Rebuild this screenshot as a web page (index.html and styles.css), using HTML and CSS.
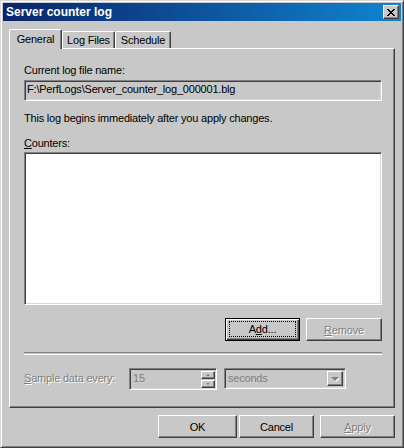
FILE: index.html
```html
<!DOCTYPE html>
<html lang="en">
<head>
    <meta charset="UTF-8">
    <title>Server counter log</title>
    <link rel="stylesheet" href="styles.css">
</head>
<body>
    <div class="window">
        <!-- Title Bar -->
        <div class="titlebar">
            <span class="title">Server counter log</span>
            <span class="close-btn">
                <svg width="8" height="7" viewBox="0 0 8 7" shape-rendering="crispEdges">
                    <path d="M0 0h2v1h-2z M6 0h2v1h-2z M1 1h2v1h-2z M5 1h2v1h-2z M2 2h4v1h-4z M3 3h2v1h-2z M2 4h4v1h-4z M1 5h2v1h-2z M5 5h2v1h-2z M0 6h2v1h-2z M6 6h2v1h-2z" fill="#000"/>
                </svg>
            </span>
        </div>

        <!-- Tabs -->
        <div class="tabs">
            <div class="tab active">General</div>
            <div class="tab">Log Files</div>
            <div class="tab">Schedule</div>
        </div>

        <!-- General Page -->
        <div class="panel">
            <div class="label">Current log file name:</div>
            <div class="field">F:\PerfLogs\Server_counter_log_000001.blg</div>
            <div class="note">This log begins immediately after you apply changes.</div>
            <div class="label counters-label"><u>C</u>ounters:</div>
            <div class="listbox"></div>

            <div class="list-actions">
                <div class="btn default"><span class="focus">A<u>d</u>d...</span></div>
                <div class="btn disabled"><u>R</u>emove</div>
            </div>

            <div class="separator"></div>

            <div class="sample-row">
                <span class="sample-label disabled"><u>S</u>ample data every:</span>
                <div class="spin">
                    <span class="spin-value">15</span>
                    <div class="updown">
                        <span class="ud"><i class="arrow up"></i></span>
                        <span class="ud"><i class="arrow down"></i></span>
                    </div>
                </div>
                <div class="combo">
                    <span class="combo-value">seconds</span>
                    <span class="drop"><i class="arrow down big"></i></span>
                </div>
            </div>
        </div>

        <!-- Dialog Buttons -->
        <div class="dialog-buttons">
            <div class="btn ok">OK</div>
            <div class="btn">Cancel</div>
            <div class="btn disabled"><u>A</u>pply</div>
        </div>
    </div>
</body>
</html>
```

FILE: styles.css
```css
/* General Styles */
body {
    margin: 0;
    font-family: 'Liberation Sans', Arial, sans-serif;
    font-size: 11px;
    letter-spacing: -0.2px;
    color: #000;
    background: #c8c8c8;
}

u {
    text-decoration: underline;
    text-underline-offset: 1px;
}

.disabled {
    color: #808080;
    text-shadow: 1px 1px 0 #fff;
}

/* Window Frame */
.window {
    width: 404px;
    height: 448px;
    box-sizing: border-box;
    padding: 2px;
    background: #c8c8c8;
    border: 1px solid;
    border-color: #d8d8d8 #404040 #404040 #d8d8d8;
    box-shadow: inset 1px 1px #fff, inset -1px -1px #808080;
}

.titlebar {
    height: 18px;
    display: flex;
    align-items: center;
    justify-content: space-between;
    padding: 0 2px 0 3px;
    background: linear-gradient(to right, #0a246a, #1084d0);
}

.title {
    color: #fff;
    font-weight: bold;
    font-size: 12px;
    letter-spacing: 0;
}

.close-btn {
    width: 16px;
    height: 14px;
    box-sizing: border-box;
    display: flex;
    align-items: center;
    justify-content: center;
    background: #c8c8c8;
    border: 1px solid;
    border-color: #fff #404040 #404040 #fff;
    box-shadow: inset -1px -1px #808080;
}

/* Tabs */
.tabs {
    display: flex;
    align-items: flex-end;
    margin: 8px 6px 0;
    height: 19px;
    position: relative;
    z-index: 1;
}

.tab {
    height: 17px;
    box-sizing: border-box;
    display: flex;
    align-items: center;
    justify-content: center;
    border: 1px solid;
    border-bottom: none;
    border-color: #fff #404040 #404040 #fff;
    border-radius: 2px 2px 0 0;
    box-shadow: inset -1px 0 #808080;
    background: #c8c8c8;
}

.tab:nth-child(1) { width: 53px; }
.tab:nth-child(2) { width: 53px; }
.tab:nth-child(3) { width: 56px; }

.tab.active {
    height: 20px;
    margin-bottom: -1px;
    padding-bottom: 2px;
}

/* Tab Page */
.panel {
    margin: 0 6px;
    height: 360px;
    box-sizing: border-box;
    padding: 15px 12px 0 14px;
    border: 1px solid;
    border-color: #fff #404040 #404040 #fff;
    box-shadow: inset -1px -1px #808080;
}

.label,
.note {
    line-height: 13px;
}

.field {
    margin-top: 3px;
    height: 21px;
    box-sizing: border-box;
    padding: 2px 2px 1px;
    line-height: 13px;
    border: 1px solid;
    border-color: #808080 #fff #fff #808080;
    box-shadow: inset 1px 1px #404040, inset -1px -1px #d8d8d8;
}

.note {
    margin-top: 11px;
}

.counters-label {
    margin-top: 12px;
}

.listbox {
    margin-top: 2px;
    height: 153px;
    box-sizing: border-box;
    background: #fff;
    border: 1px solid;
    border-color: #808080 #fff #fff #808080;
    box-shadow: inset 1px 1px #404040, inset -1px -1px #d8d8d8;
}

/* Buttons */
.btn {
    width: 75px;
    height: 23px;
    box-sizing: border-box;
    display: flex;
    align-items: center;
    justify-content: center;
    border: 1px solid;
    border-color: #fff #404040 #404040 #fff;
    box-shadow: inset -1px -1px #808080;
}

.btn.default {
    border-color: #000;
    box-shadow: inset 1px 1px #fff, inset -1px -1px #404040, inset -2px -2px #808080;
    align-items: stretch;
}

.btn .focus {
    flex: 1;
    margin: 2px 3px 3px;
    display: flex;
    align-items: center;
    justify-content: center;
    border: 1px dotted #000;
}

.list-actions {
    display: flex;
    justify-content: flex-end;
    gap: 6px;
    margin-top: 13px;
}

.list-actions .btn:last-child {
    width: 76px;
}

.separator {
    margin-top: 11px;
    height: 1px;
    border-top: 1px solid #808080;
    border-bottom: 1px solid #fff;
}

/* Sample Interval */
.sample-row {
    display: flex;
    align-items: flex-start;
    margin-top: 13px;
}

.sample-label {
    width: 105px;
    margin-top: 4px;
    line-height: 13px;
}

.spin,
.combo {
    box-sizing: border-box;
    display: flex;
    border: 1px solid;
    border-color: #808080 #fff #fff #808080;
    box-shadow: inset 1px 1px #404040, inset -1px -1px #d8d8d8;
    color: #808080;
}

.spin {
    width: 88px;
    height: 22px;
    padding: 1px 1px 1px 2px;
}

.spin-value {
    flex: 1;
    line-height: 13px;
    padding-left: 1px;
    padding-top: 2px;
}

.updown {
    width: 14px;
    display: flex;
    flex-direction: column;
    gap: 1px;
    margin: 1px 0 0;
}

.ud {
    flex: 1;
    display: flex;
    align-items: center;
    justify-content: center;
    box-sizing: border-box;
    border: 1px solid;
    border-color: #fff #404040 #404040 #fff;
    box-shadow: inset -1px -1px #808080;
}

.arrow {
    width: 0;
    height: 0;
    border-left: 2px solid transparent;
    border-right: 2px solid transparent;
}

.arrow.up {
    border-bottom: 2px solid #808080;
}

.arrow.down {
    border-top: 2px solid #808080;
}

.arrow.big {
    border-left-width: 4px;
    border-right-width: 4px;
    border-top-width: 4px;
    filter: drop-shadow(1px 1px 0 #fff);
}

.combo {
    width: 122px;
    height: 21px;
    margin-left: 7px;
    padding: 2px;
    align-items: stretch;
}

.combo-value {
    flex: 1;
    line-height: 13px;
    padding-left: 1px;
    padding-top: 1px;
}

.drop {
    width: 16px;
    display: flex;
    align-items: center;
    justify-content: center;
    box-sizing: border-box;
    border: 1px solid;
    border-color: #fff #404040 #404040 #fff;
    box-shadow: inset -1px -1px #808080;
}

/* Dialog Buttons */
.dialog-buttons {
    display: flex;
    justify-content: flex-end;
    gap: 6px;
    margin: 7px 6px 0;
}

.dialog-buttons .btn.ok {
    width: 79px;
    margin-right: -4px;
}
```
